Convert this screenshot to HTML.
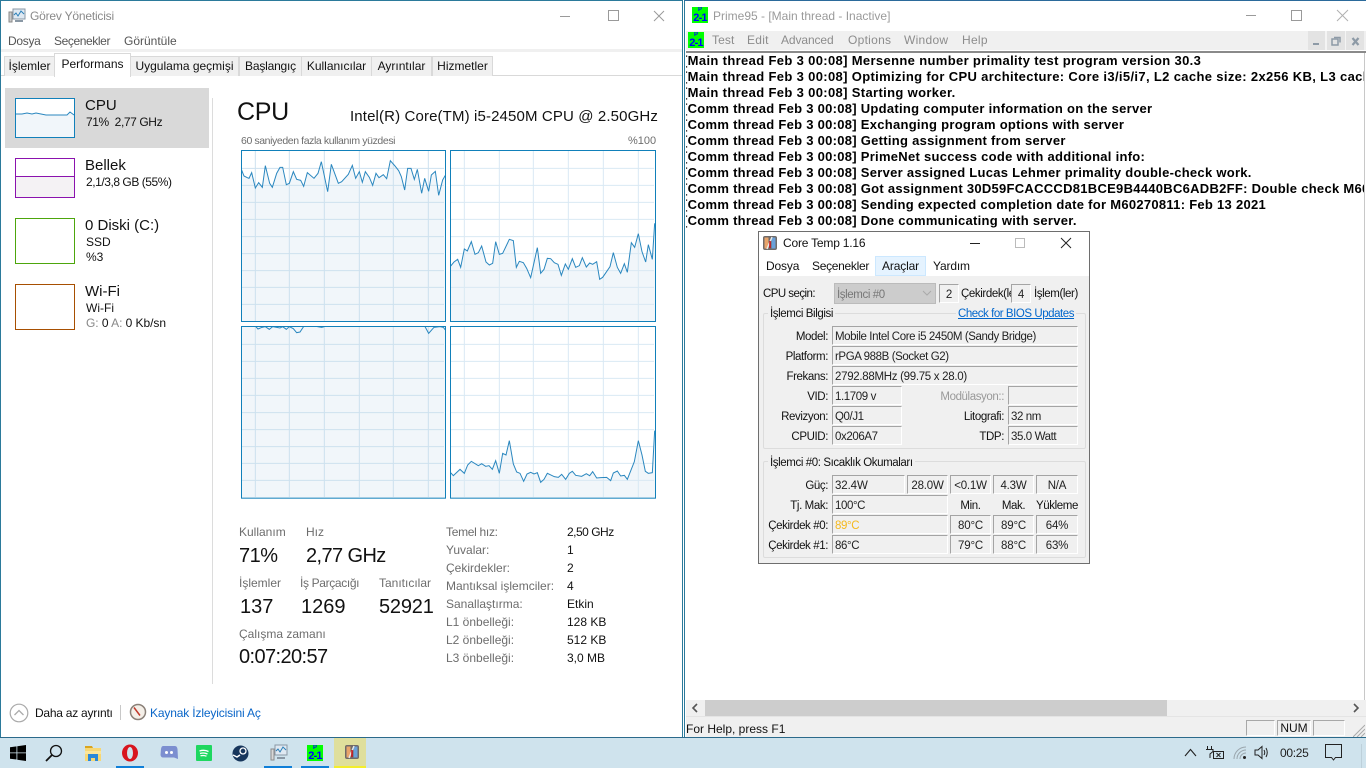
<!DOCTYPE html>
<html lang="tr"><head><meta charset="utf-8"><title>Görev Yöneticisi</title>
<style>
html,body{margin:0;padding:0;width:1366px;height:768px;overflow:hidden;background:#fff}
body{position:relative;font-family:"Liberation Sans",sans-serif;font-size:12px;color:#111}
.a,.t,.f{position:absolute}
.t{white-space:nowrap;line-height:16px}
.g{color:#666}
.l{color:#6d6d6d}
.tab{position:absolute;top:56px;height:19px;background:#f0f0f0;border:1px solid #d9d9d9;border-bottom:0;box-sizing:content-box;text-align:center;line-height:19px;white-space:nowrap}
.f{box-sizing:border-box;height:19px;border:1px solid;border-color:#a4a4a4 #fff #fff #a4a4a4;background:#f0f0f0;line-height:16px;padding:2px 0 0 2px;white-space:nowrap;overflow:hidden;color:#222}
.c{text-align:center;padding-left:0;letter-spacing:-.2px}
.r{text-align:right}
.p{position:absolute;left:-3px;white-space:pre;font-weight:bold;font-size:13px;line-height:16px;color:#000;letter-spacing:.35px}
.q{letter-spacing:.28px}
.ico{position:absolute;width:16px;height:16px;background:#0f0;overflow:hidden}
.ico b{position:absolute;left:0;width:16px;text-align:center;color:#00f;font-weight:bold;line-height:10px}
.ico .pp{top:0;font-size:6px;line-height:6px}
.ico .tt{top:6px;font-size:11px;letter-spacing:-.8px}
.ct{font-size:11.5px;letter-spacing:-.4px}
.ct .t{margin-top:1px}
.m{font-size:12px;letter-spacing:-.15px}
</style></head><body>

<!-- Task Manager window -->
<div class="a" style="left:0;top:0;width:683px;height:738px;background:#fff;border:1px solid #2b7a9b;box-sizing:border-box"></div>
<svg class="a" style="left:8px;top:8px" width="18" height="16" viewBox="0 0 18 16"><rect x="5" y="1" width="12" height="10" fill="#dfe9f2" stroke="#8a98a5"/><path d="M6 7l2-2 2 3 3-5 3 3" fill="none" stroke="#2a7fb8"/><rect x="1" y="4" width="3" height="10" fill="#c9c9c9" stroke="#8a8a8a"/><path d="M7 13h8" stroke="#8a98a5" stroke-width="2"/></svg>
<div class="t" style="left:30px;top:8px;color:#8a8a8a;letter-spacing:-.2px">Görev Yöneticisi</div>
<svg class="a" style="left:560px;top:8px" width="110" height="16" fill="none" stroke="#9a9a9a"><path d="M0 8.500H10"/><rect x="48.500" y="2.500" width="10" height="10"/><path d="M94 3l10 10M104 3L94 13"/></svg>
<div class="t l" style="left:8px;top:33px;color:#555;letter-spacing:-.3px">Dosya</div>
<div class="t l" style="left:54px;top:33px;color:#555;letter-spacing:-.4px">Seçenekler</div>
<div class="t l" style="left:124px;top:33px;color:#555">Görüntüle</div>
<div class="a" style="left:1px;top:49px;width:681px;height:3px;background:#f0f0f0"></div>
<div class="a" style="left:1px;top:75px;width:681px;height:1px;background:#d9d9d9"></div>
<div class="tab" style="left:4px;width:49px">İşlemler</div>
<div class="tab" style="left:130px;width:107px">Uygulama geçmişi</div>
<div class="tab" style="left:239px;width:61px;letter-spacing:-.2px">Başlangıç</div>
<div class="tab" style="left:301px;width:69px">Kullanıcılar</div>
<div class="tab" style="left:371px;width:59px">Ayrıntılar</div>
<div class="tab" style="left:432px;width:59px">Hizmetler</div>
<div class="tab" style="left:54px;top:53px;width:75px;height:23px;background:#fff;line-height:20px;z-index:2">Performans</div>

<!-- Sidebar -->
<div class="a" style="left:5px;top:88px;width:204px;height:60px;background:#d9d9d9"></div>
<div class="a" style="left:212px;top:98px;width:1px;height:586px;background:#dcdcdc"></div>
<div class="a" style="left:15px;top:98px;width:60px;height:40px;box-sizing:border-box;border:1px solid #1180ba;background:#fff"></div>
<svg class="a" style="left:16px;top:99px" width="58" height="38"><path d="M0 15l6 0 5-1 5 1 4-1 5 1 5 1 6 0 5 0 6 0 4 0 3-3 4 3V38H0z" fill="#f1f6fa"/><path d="M0 15l6 0 5-1 5 1 4-1 5 1 5 1 6 0 5 0 6 0 4 0 3-3 4 3" fill="none" stroke="#2a87bf"/></svg>
<div class="t" style="left:85px;top:98px;font-size:15px">CPU</div>
<div class="t" style="left:86px;top:114px;letter-spacing:-.4px">71%&nbsp; 2,77 GHz</div>
<div class="a" style="left:15px;top:158px;width:60px;height:40px;box-sizing:border-box;border:1px solid #8b12ae;background:linear-gradient(#fff 0 17px,#8b12ae 17px 18px,#f4f2f4 18px)"></div>
<div class="t" style="left:85px;top:158px;font-size:15px">Bellek</div>
<div class="t" style="left:86px;top:174px;letter-spacing:-.45px">2,1/3,8 GB (55%)</div>
<div class="a" style="left:15px;top:218px;width:60px;height:46px;box-sizing:border-box;border:1px solid #4da60c;background:#fff"></div>
<div class="t" style="left:85px;top:218px;font-size:15px">0 Diski (C:)</div>
<div class="t" style="left:86px;top:234px">SSD</div>
<div class="t" style="left:86px;top:249px">%3</div>
<div class="a" style="left:15px;top:284px;width:60px;height:46px;box-sizing:border-box;border:1px solid #a74f01;background:#fff"></div>
<div class="t" style="left:85px;top:284px;font-size:15px">Wi-Fi</div>
<div class="t" style="left:86px;top:300px">Wi-Fi</div>
<div class="t" style="left:86px;top:315px;letter-spacing:-.05px"><span style="color:#888">G:</span> 0 <span style="color:#888">A:</span> 0 Kb/sn</div>

<!-- Main -->
<div class="t" style="left:237px;top:96px;font-size:25px;line-height:32px;letter-spacing:-.3px">CPU</div>
<div class="t" style="left:350px;top:108px;font-size:15px;line-height:18px;letter-spacing:.13px">Intel(R) Core(TM) i5-2450M CPU @ 2.50GHz</div>
<div class="t l" style="left:241px;top:133px;font-size:10.500px;letter-spacing:-.4px">60 saniyeden fazla kullanım yüzdesi</div>
<div class="t l" style="left:628px;top:133px;font-size:11px">%100</div>

<svg class="a" style="left:230px;top:140px" width="440" height="370" viewBox="0 0 1320 1110">
<defs>
<clipPath id="c1"><rect x="36" y="33" width="610" height="510"/></clipPath>
<clipPath id="c2"><rect x="663" y="33" width="613" height="510"/></clipPath>
<clipPath id="c3"><rect x="36" y="561" width="610" height="513"/></clipPath>
<clipPath id="c4"><rect x="663" y="561" width="613" height="513"/></clipPath>
<g id="gr" fill="none" stroke="#cde1ef" stroke-width="3">
<path d="M36 85H642M36 136H642M36 187H642M36 238H642M36 290H642M36 341H642M36 392H642M36 442H642M36 493H642"/>
<path d="M76 33V543M178 33V543M283 33V543M388 33V543M490 33V543M595 33V543"/>
</g>
<g id="gb" fill="none" stroke="#d9e9f4" stroke-width="3">
<path d="M663 85H1272M663 136H1272M663 187H1272M663 238H1272M663 290H1272M663 341H1272M663 392H1272M663 442H1272M663 493H1272"/>
<path d="M703 33V543M808 33V543M910 33V543M1015 33V543M1120 33V543M1225 33V543"/>
</g>
</defs>
<!-- G1 -->
<rect x="36" y="33" width="610" height="510" fill="#fff"/>
<g clip-path="url(#c1)">
<polygon fill="#f1f6fa" points="34,88 42,108 52,113 57,115 65,98 76,144 86,128 97,142 106,77 119,130 127,142 140,100 150,82 158,82 169,134 178,130 190,95 200,118 212,121 221,139 232,98 252,115 264,100 274,65 293,155 304,73 325,130 335,125 355,103 367,76 377,115 388,95 397,127 406,95 418,112 428,136 438,100 447,113 460,104 470,116 481,62 495,78 506,92 514,110 524,150 533,85 543,85 553,118 562,88 575,160 584,115 596,154 604,105 616,94 626,166 638,120 646,106 646,545 34,545"/>
<use href="#gr"/>
<polyline fill="none" stroke="#2a87bf" stroke-width="3" points="34,88 42,108 52,113 57,115 65,98 76,144 86,128 97,142 106,77 119,130 127,142 140,100 150,82 158,82 169,134 178,130 190,95 200,118 212,121 221,139 232,98 252,115 264,100 274,65 293,155 304,73 325,130 335,125 355,103 367,76 377,115 388,95 397,127 406,95 418,112 428,136 438,100 447,113 460,104 470,116 481,62 495,78 506,92 514,110 524,150 533,85 543,85 553,118 562,88 575,160 584,115 596,154 604,105 616,94 626,166 638,120 646,106"/>
</g>
<rect x="34.500" y="31.500" width="612" height="513" fill="none" stroke="#1180ba" stroke-width="3"/>
<!-- G2 -->
<rect x="663" y="33" width="613" height="510" fill="#fff"/>
<g clip-path="url(#c2)">
<polygon fill="#f1f6fa" points="662,378 672,366 683,358 692,382 703,327 712,333 724,305 735,343 745,338 755,318 768,366 778,375 788,370 797,305 808,343 818,340 838,298 850,302 859,382 868,364 880,368 890,385 902,413 922,323 932,400 942,388 952,355 962,356 973,368 984,373 994,406 1006,372 1015,388 1027,356 1037,382 1048,377 1057,353 1069,381 1079,369 1088,373 1100,365 1109,418 1118,412 1140,380 1150,338 1162,382 1172,400 1183,371 1192,397 1204,308 1214,322 1225,281 1236,335 1247,366 1255,314 1267,358 1274,250 1276,250 1276,545 662,545"/>
<use href="#gb"/>
<polyline fill="none" stroke="#2a87bf" stroke-width="3" points="662,378 672,366 683,358 692,382 703,327 712,333 724,305 735,343 745,338 755,318 768,366 778,375 788,370 797,305 808,343 818,340 838,298 850,302 859,382 868,364 880,368 890,385 902,413 922,323 932,400 942,388 952,355 962,356 973,368 984,373 994,406 1006,372 1015,388 1027,356 1037,382 1048,377 1057,353 1069,381 1079,369 1088,373 1100,365 1109,418 1118,412 1140,380 1150,338 1162,382 1172,400 1183,371 1192,397 1204,308 1214,322 1225,281 1236,335 1247,366 1255,314 1267,358 1274,250"/>
</g>
<rect x="661.500" y="31.500" width="615" height="513" fill="none" stroke="#1180ba" stroke-width="3"/>
<!-- G3 -->
<rect x="36" y="561" width="610" height="513" fill="#f1f6fa"/>
<g clip-path="url(#c3)">
<use href="#gr" y="528"/>
<polyline fill="none" stroke="#2a87bf" stroke-width="3" transform="translate(0,540)" points="72,14 84,27 96,22 106,20 118,28 128,20 140,22 150,24 158,20 169,28 178,20 190,26 200,38 210,36 222,18"/>
<polyline fill="none" stroke="#2a87bf" stroke-width="3" transform="translate(0,540)" points="262,20 275,22 283,20"/>
<polyline fill="none" stroke="#2a87bf" stroke-width="3" transform="translate(0,540)" points="584,18 596,40 612,22 630,20 640,22 646,30"/>
</g>
<rect x="34.500" y="559.500" width="612" height="515" fill="none" stroke="#1180ba" stroke-width="3"/>
<!-- G4 -->
<rect x="663" y="561" width="613" height="513" fill="#fff"/>
<g clip-path="url(#c4)">
<polygon transform="translate(0,540)" fill="#f1f6fa" points="662,458 670,467 690,448 703,460 713,435 724,424 745,437 755,431 767,439 777,437 787,448 797,422 808,460 818,400 828,405 838,362 850,432 860,456 870,460 881,484 891,462 902,457 912,462 922,458 932,487 942,478 952,460 973,470 985,472 995,463 1007,478 1018,460 1027,454 1037,466 1055,469 1069,461 1079,467 1088,455 1100,474 1112,473 1130,472 1142,482 1150,459 1162,453 1172,468 1183,466 1192,478 1213,425 1225,362 1236,405 1246,454 1255,460 1267,458 1274,332 1276,332 1276,536 662,536"/>
<use href="#gb" y="528"/>
<polyline transform="translate(0,540)" fill="none" stroke="#2a87bf" stroke-width="3" points="662,458 670,467 690,448 703,460 713,435 724,424 745,437 755,431 767,439 777,437 787,448 797,422 808,460 818,400 828,405 838,362 850,432 860,456 870,460 881,484 891,462 902,457 912,462 922,458 932,487 942,478 952,460 973,470 985,472 995,463 1007,478 1018,460 1027,454 1037,466 1055,469 1069,461 1079,467 1088,455 1100,474 1112,473 1130,472 1142,482 1150,459 1162,453 1172,468 1183,466 1192,478 1213,425 1225,362 1236,405 1246,454 1255,460 1267,458 1274,332"/>
</g>
<rect x="661.500" y="559.500" width="615" height="515" fill="none" stroke="#1180ba" stroke-width="3"/>
</svg>

<!-- Stats -->
<div class="t l" style="left:239px;top:524px">Kullanım</div>
<div class="t l" style="left:306px;top:524px">Hız</div>
<div class="t" style="left:239px;top:544px;font-size:20px;line-height:24px;letter-spacing:-.5px">71%</div>
<div class="t" style="left:306px;top:544px;font-size:20px;line-height:24px;letter-spacing:-.6px">2,77 GHz</div>
<div class="t l" style="left:239px;top:575px">İşlemler</div>
<div class="t l" style="left:300px;top:575px;letter-spacing:-.35px">İş Parçacığı</div>
<div class="t l" style="left:379px;top:575px">Tanıtıcılar</div>
<div class="t" style="left:240px;top:595px;font-size:20px;line-height:24px">137</div>
<div class="t" style="left:301px;top:595px;font-size:20px;line-height:24px">1269</div>
<div class="t" style="left:379px;top:595px;font-size:20px;line-height:24px;letter-spacing:-.2px">52921</div>
<div class="t l" style="left:239px;top:626px">Çalışma zamanı</div>
<div class="t" style="left:239px;top:645px;font-size:20px;line-height:24px;letter-spacing:-.6px">0:07:20:57</div>

<div class="t l" style="left:446px;top:524px;letter-spacing:-.3px">Temel hız:</div><div class="t" style="left:567px;top:524px;letter-spacing:-.5px">2,50 GHz</div>
<div class="t l" style="left:446px;top:542px">Yuvalar:</div><div class="t" style="left:567px;top:542px">1</div>
<div class="t l" style="left:446px;top:560px">Çekirdekler:</div><div class="t" style="left:567px;top:560px">2</div>
<div class="t l" style="left:446px;top:578px">Mantıksal işlemciler:</div><div class="t" style="left:567px;top:578px">4</div>
<div class="t l" style="left:446px;top:596px">Sanallaştırma:</div><div class="t" style="left:567px;top:596px">Etkin</div>
<div class="t l" style="left:446px;top:614px">L1 önbelleği:</div><div class="t" style="left:567px;top:614px">128 KB</div>
<div class="t l" style="left:446px;top:632px">L2 önbelleği:</div><div class="t" style="left:567px;top:632px">512 KB</div>
<div class="t l" style="left:446px;top:650px">L3 önbelleği:</div><div class="t" style="left:567px;top:650px">3,0 MB</div>

<!-- footer -->
<svg class="a" style="left:9px;top:703px" width="20" height="20" fill="none" stroke="#aaa"><circle cx="10" cy="10" r="8.800" stroke-width="1.200"/><path d="M5.500 12l4.500-4.500 4.500 4.500" stroke-width="1.300"/></svg>
<div class="t" style="left:35px;top:705px;letter-spacing:-.25px">Daha az ayrıntı</div>
<div class="a" style="left:120px;top:705px;width:1px;height:15px;background:#c8c8c8"></div>
<svg class="a" style="left:129px;top:703px" width="18" height="18"><circle cx="9" cy="9" r="7.500" fill="#f4efe8" stroke="#8a8078" stroke-width="1.500"/><path d="M5 4.500l6 8" stroke="#c0392b" stroke-width="1.500"/></svg>
<div class="t" style="left:150px;top:705px;color:#0a66c8;letter-spacing:-.15px">Kaynak İzleyicisini Aç</div>

<!-- Prime95 window -->
<div class="a" style="left:684px;top:0;width:682px;height:738px;background:#fff;border-top:1px solid #2b6a9b;border-left:1px solid #2b7a9b;box-sizing:border-box"></div>
<div class="ico" style="left:692px;top:7px"><b class="pp">P</b><b class="tt">2-1</b></div>
<div class="t" style="left:713px;top:8px;color:#9a9a9a">Prime95 - [Main thread - Inactive]</div>
<svg class="a" style="left:1240px;top:8px" width="120" height="16" fill="none" stroke="#9a9a9a"><path d="M6 7.500H16"/><rect x="51.500" y="2.500" width="10" height="10"/><path d="M97 2l11 11M108 2L97 13" stroke="#b0b0b0"/></svg>
<div class="a" style="left:686px;top:31px;width:680px;height:19px;background:#f0f0f0"></div>
<div class="ico" style="left:688px;top:32px"><b class="pp">P</b><b class="tt">2-1</b></div>
<div class="t" style="left:712px;top:32px;color:#8c8c8c;letter-spacing:.1px">Test</div>
<div class="t" style="left:747px;top:32px;color:#8c8c8c;letter-spacing:.28px">Edit</div>
<div class="t" style="left:781px;top:32px;color:#8c8c8c;letter-spacing:-.1px">Advanced</div>
<div class="t" style="left:848px;top:32px;color:#8c8c8c;letter-spacing:.28px">Options</div>
<div class="t" style="left:904px;top:32px;color:#8c8c8c;letter-spacing:.28px">Window</div>
<div class="t" style="left:962px;top:32px;color:#8c8c8c;letter-spacing:.28px">Help</div>
<div class="a" style="left:1308px;top:31px;width:56px;height:19px;background:#e3e3e3"></div>
<div class="a" style="left:1325px;top:31px;width:2px;height:19px;background:#f4f4f4"></div>
<div class="a" style="left:1345px;top:31px;width:1px;height:19px;background:#f4f4f4"></div>
<svg class="a" style="left:1310px;top:33px" width="56" height="16" fill="none" stroke="#8d9aa6" stroke-width="1.500"><path d="M3 11h6" stroke-width="2"/><rect x="22" y="6" width="6" height="6"/><path d="M24 4.500h6v5"/><path d="M42.500 5l6 7M48.500 5l-6 7" stroke-width="2.200"/></svg>
<div class="a" style="left:686px;top:51px;width:680px;height:2px;background:#8a8a8a"></div>
<div class="a" style="left:1364px;top:53px;width:1px;height:647px;background:#c8c8c8"></div>

<div class="a" style="left:686px;top:53px;width:678px;height:176px;overflow:hidden">
<div class="p" style="top:0">[Main thread Feb 3 00:08] Mersenne number primality test program version 30.3</div>
<div class="p" style="top:16px">[Main thread Feb 3 00:08] Optimizing for CPU architecture: Core i3/i5/i7, L2 cache size: 2x256 KB, L3 cache size: 3 MB</div>
<div class="p" style="top:32px">[Main thread Feb 3 00:08] Starting worker.</div>
<div class="p q" style="top:48px">[Comm thread Feb 3 00:08] Updating computer information on the server</div>
<div class="p q" style="top:64px">[Comm thread Feb 3 00:08] Exchanging program options with server</div>
<div class="p q" style="top:80px">[Comm thread Feb 3 00:08] Getting assignment from server</div>
<div class="p q" style="top:96px">[Comm thread Feb 3 00:08] PrimeNet success code with additional info:</div>
<div class="p q" style="top:112px">[Comm thread Feb 3 00:08] Server assigned Lucas Lehmer primality double-check work.</div>
<div class="p q" style="top:128px">[Comm thread Feb 3 00:08] Got assignment 30D59FCACCCD81BCE9B4440BC6ADB2FF: Double check M60270811</div>
<div class="p q" style="top:144px">[Comm thread Feb 3 00:08] Sending expected completion date for M60270811: Feb 13 2021</div>
<div class="p q" style="top:160px">[Comm thread Feb 3 00:08] Done communicating with server.</div>
</div>

<!-- scroll + status -->
<div class="a" style="left:686px;top:700px;width:680px;height:16px;background:#f0f0f0"></div>
<div class="a" style="left:705px;top:700px;width:462px;height:16px;background:#cdcdcd"></div>
<svg class="a" style="left:690px;top:703px" width="10" height="10" fill="none" stroke="#555" stroke-width="1.600"><path d="M7 1L3 5l4 4"/></svg>
<svg class="a" style="left:1351px;top:703px" width="10" height="10" fill="none" stroke="#555" stroke-width="1.600"><path d="M3 1l4 4-4 4"/></svg>
<div class="a" style="left:686px;top:716px;width:680px;height:1px;background:#e4e4e4"></div>
<div class="a" style="left:686px;top:717px;width:680px;height:20px;background:#f0f0f0"></div>
<div class="t" style="left:686px;top:721px">For Help, press F1</div>
<div class="a" style="left:1246px;top:720px;width:29px;height:16px;border:1px solid;border-color:#a8a8a8 #fff #fff #a8a8a8;box-sizing:border-box"></div>
<div class="a" style="left:1277px;top:720px;width:34px;height:16px;border:1px solid;border-color:#a8a8a8 #fff #fff #a8a8a8;box-sizing:border-box;line-height:15px;text-align:center;color:#111">NUM</div>
<div class="a" style="left:1313px;top:720px;width:32px;height:16px;border:1px solid;border-color:#a8a8a8 #fff #fff #a8a8a8;box-sizing:border-box"></div>
<svg class="a" style="left:1353px;top:724px" width="12" height="13" stroke="#aaa"><path d="M0 13L12 1M4 13l8-8M8 13l4-4"/></svg>
<div class="a" style="left:0;top:737px;width:1366px;height:1px;background:#2b6a8b"></div>

<!-- Core Temp -->
<div class="a" style="left:758px;top:231px;width:332px;height:333px;box-sizing:border-box;border:1px solid #6e6e6e;background:#f0f0f0"></div>
<div class="a" style="left:759px;top:232px;width:330px;height:44px;background:#fff"></div>
<svg class="a" style="left:762px;top:235px" width="16" height="16"><rect x="1" y="1" width="14" height="14" rx="2" fill="#6f6a68"/><rect x="2.500" y="2.500" width="4" height="11" fill="#e8a46a"/><rect x="9.500" y="2.500" width="4" height="11" fill="#6aa0d8"/><path d="M5 14L10 2" stroke="#e8e8e8" stroke-width="1.500"/><path d="M8 13V6" stroke="#c8161c" stroke-width="1.600"/></svg>
<div class="t" style="left:783px;top:235px;letter-spacing:-.2px">Core Temp 1.16</div>
<svg class="a" style="left:965px;top:237px" width="115" height="13" fill="none"><path d="M5 6.500H15" stroke="#222"/><rect x="50.500" y="1.500" width="9" height="9" stroke="#bbb"/><path d="M96 1l10 10M106 1L96 11" stroke="#222"/></svg>
<div class="a" style="left:875px;top:256px;width:51px;height:20px;box-sizing:border-box;background:#e5f3ff;border:1px solid #cce8ff"></div>
<div class="t m" style="left:766px;top:258px">Dosya</div>
<div class="t m" style="left:812px;top:258px;letter-spacing:-.3px">Seçenekler</div>
<div class="t m" style="left:882px;top:258px">Araçlar</div>
<div class="t m" style="left:933px;top:258px">Yardım</div>

<div class="ct">
<div class="t" style="left:763px;top:285px;letter-spacing:-.55px">CPU seçin:</div>
<div class="a" style="left:834px;top:283px;width:102px;height:21px;box-sizing:border-box;background:#ccc;border:1px solid #bbb"></div>
<div class="t" style="left:837px;top:286px;color:#777">İşlemci #0</div>
<svg class="a" style="left:922px;top:290px" width="10" height="7" fill="none" stroke="#aaa"><path d="M1 1l4 4 4-4"/></svg>
<div class="f c" style="left:939px;top:284px;width:20px">2</div>
<div class="t" style="left:961px;top:285px;width:50px;overflow:hidden">Çekirdek(ler)</div>
<div class="f c" style="left:1011px;top:284px;width:20px">4</div>
<div class="t" style="left:1034px;top:285px">İşlem(ler)</div>

<!-- group 1 -->
<div class="a" style="left:763px;top:313px;width:323px;height:136px;box-sizing:border-box;border:1px solid #dcdcdc;border-radius:2px"></div>
<div class="t" style="left:768px;top:305px;background:#f0f0f0;padding:0 2px 0 2px">İşlemci Bilgisi</div>
<div class="t" style="left:956px;top:305px;background:#f0f0f0;padding:0 2px;color:#0066cc;text-decoration:underline;letter-spacing:-.45px">Check for BIOS Updates</div>

<div class="t r" style="left:760px;top:328px;width:68px">Model:</div><div class="f" style="left:832px;top:326px;width:246px">Mobile Intel Core i5 2450M (Sandy Bridge)</div>
<div class="t r" style="left:760px;top:348px;width:68px">Platform:</div><div class="f" style="left:832px;top:346px;width:246px">rPGA 988B (Socket G2)</div>
<div class="t r" style="left:760px;top:368px;width:68px">Frekans:</div><div class="f" style="left:832px;top:366px;width:246px;letter-spacing:-.3px">2792.88MHz (99.75 x 28.0)</div>
<div class="t r" style="left:760px;top:388px;width:68px">VID:</div><div class="f" style="left:832px;top:386px;width:70px">1.1709 v</div>
<div class="t r" style="left:910px;top:388px;width:94px;color:#999">Modülasyon::</div><div class="f" style="left:1008px;top:386px;width:70px"></div>
<div class="t r" style="left:760px;top:408px;width:68px">Revizyon:</div><div class="f" style="left:832px;top:406px;width:70px">Q0/J1</div>
<div class="t r" style="left:910px;top:408px;width:94px">Litografi:</div><div class="f" style="left:1008px;top:406px;width:70px">32 nm</div>
<div class="t r" style="left:760px;top:428px;width:68px">CPUID:</div><div class="f" style="left:832px;top:426px;width:70px">0x206A7</div>
<div class="t r" style="left:910px;top:428px;width:94px">TDP:</div><div class="f" style="left:1008px;top:426px;width:70px">35.0 Watt</div>

<!-- group 2 -->
<div class="a" style="left:763px;top:461px;width:323px;height:97px;box-sizing:border-box;border:1px solid #dcdcdc;border-radius:2px"></div>
<div class="t" style="left:768px;top:454px;background:#f0f0f0;padding:0 2px">İşlemci #0: Sıcaklık Okumaları</div>

<div class="t r" style="left:760px;top:477px;width:68px">Güç:</div>
<div class="f" style="left:832px;top:475px;width:73px;letter-spacing:-.1px">32.4W</div>
<div class="f c" style="left:907px;top:475px;width:41px">28.0W</div>
<div class="f c" style="left:950px;top:475px;width:41px">&lt;0.1W</div>
<div class="f c" style="left:993px;top:475px;width:41px">4.3W</div>
<div class="f c" style="left:1036px;top:475px;width:42px">N/A</div>

<div class="t r" style="left:760px;top:497px;width:68px">Tj. Mak:</div>
<div class="f" style="left:832px;top:495px;width:116px">100°C</div>
<div class="t" style="left:950px;top:497px;width:41px;text-align:center">Min.</div>
<div class="t" style="left:993px;top:497px;width:41px;text-align:center">Mak.</div>
<div class="t" style="left:1036px;top:497px;width:42px;text-align:center">Yükleme</div>

<div class="t r" style="left:760px;top:517px;width:68px">Çekirdek #0:</div>
<div class="f" style="left:832px;top:515px;width:116px;color:#f5b91e">89°C</div>
<div class="f c" style="left:950px;top:515px;width:41px">80°C</div>
<div class="f c" style="left:993px;top:515px;width:41px">89°C</div>
<div class="f c" style="left:1036px;top:515px;width:42px">64%</div>

<div class="t r" style="left:760px;top:537px;width:68px">Çekirdek #1:</div>
<div class="f" style="left:832px;top:535px;width:116px">86°C</div>
<div class="f c" style="left:950px;top:535px;width:41px">79°C</div>
<div class="f c" style="left:993px;top:535px;width:41px">88°C</div>
<div class="f c" style="left:1036px;top:535px;width:42px">63%</div>
</div>

<!-- Taskbar -->
<div class="a" style="left:0;top:738px;width:1366px;height:30px;background:#cfe3ed"></div>
<svg class="a" style="left:10px;top:745px" width="16" height="16" fill="#000"><path d="M0 2.300l6.500-.9V7.500H0zM7.300 1.300L16 0v7.500H7.300zM0 8.300h6.500v6.200L0 13.700zM7.300 8.300H16V16l-8.700-1.300z"/></svg>
<svg class="a" style="left:45px;top:744px" width="18" height="18" fill="none" stroke="#111" stroke-width="1.300"><circle cx="11" cy="7" r="5.500"/><path d="M7 11l-6 6" stroke-width="1.800"/></svg>
<svg class="a" style="left:85px;top:745px" width="17" height="16"><path d="M0 1h7l1 2H0z" fill="#d9a520"/><rect x="0" y="3" width="16" height="13" fill="#f7d774"/><rect x="0" y="6" width="16" height="3" fill="#fbe59a"/><path d="M3 16v-7h10v7h-3v-3H6v3z" fill="#2b88d8"/></svg>
<svg class="a" style="left:122px;top:744px" width="17" height="18"><ellipse cx="8" cy="9" rx="8" ry="8.500" fill="#d8141e"/><ellipse cx="8" cy="9" rx="3" ry="6" fill="#cfe3ed"/></svg>
<div class="a" style="left:116px;top:766px;width:28px;height:2px;background:#0f7fd8"></div>
<svg class="a" style="left:160px;top:745px" width="18" height="16"><path d="M3 1h12q2 0 2.500 3l.5 10-4-1.500H3q-2 0-2.500-2.500L1 4q.5-3 2-3z" fill="#7c8fd0"/><circle cx="6.500" cy="7.500" r="1.500" fill="#fff"/><circle cx="11.500" cy="7.500" r="1.500" fill="#fff"/></svg>
<svg class="a" style="left:196px;top:745px" width="16" height="16"><rect width="16" height="16" rx="1" fill="#1ed760"/><path d="M3.500 6c3-1 6-1 9 .5M4 8.500c2.500-.7 5-.7 7.500.5M4.500 10.800c2-.5 4-.5 6 .4" fill="none" stroke="#fff" stroke-width="1.300"/></svg>
<svg class="a" style="left:232px;top:745px" width="17" height="17"><circle cx="8.500" cy="8.500" r="8" fill="#17365c"/><circle cx="11" cy="6" r="3" fill="none" stroke="#fff" stroke-width="1.300"/><path d="M1 10l4 2 3-2" fill="none" stroke="#fff" stroke-width="1.500"/></svg>
<svg class="a" style="left:270px;top:744px" width="18" height="17"><rect x="5" y="1" width="12" height="10" fill="#dfe9f2" stroke="#8a98a5"/><path d="M6 7l2-2 2 3 3-5 3 3" fill="none" stroke="#2a7fb8"/><rect x="1" y="5" width="3" height="11" fill="#d8d8d8" stroke="#8a8a8a"/><path d="M7 14h8" stroke="#8a98a5" stroke-width="2"/></svg>
<div class="a" style="left:264px;top:766px;width:28px;height:2px;background:#0f7fd8"></div>
<div class="ico" style="left:307px;top:745px"><b class="pp">P</b><b class="tt">2-1</b></div>
<div class="a" style="left:301px;top:766px;width:28px;height:2px;background:#0f7fd8"></div>
<div class="a" style="left:334px;top:738px;width:32px;height:30px;background:#dfdf9c"></div>
<svg class="a" style="left:344px;top:744px" width="16" height="16"><rect x="1" y="1" width="14" height="14" rx="2" fill="#6f6a68"/><rect x="2.500" y="2.500" width="4" height="11" fill="#e8a46a"/><rect x="9.500" y="2.500" width="4" height="11" fill="#6aa0d8"/><path d="M5 14L10 2" stroke="#e8e8e8" stroke-width="1.500"/><path d="M8 13V6" stroke="#c8161c" stroke-width="1.600"/></svg>
<div class="a" style="left:334px;top:766px;width:32px;height:2px;background:#f3ee2b"></div>

<!-- Tray -->
<svg class="a" style="left:1184px;top:748px" width="13" height="9" fill="none" stroke="#222" stroke-width="1.100"><path d="M1 8l5.500-6.500L12 8"/></svg>
<svg class="a" style="left:1206px;top:745px" width="18" height="15" fill="none" stroke="#222"><path d="M1.500 1v3M5.500 1v3M0 4.500h7v2L4 9v4"/><rect x="7.500" y="6.500" width="10" height="7" fill="#cfe3ed"/><path d="M10.500 8l4 4M14.500 8l-4 4"/></svg>
<svg class="a" style="left:1233px;top:746px" width="14" height="14" fill="none" stroke="#9aa6ad"><path d="M1 13A12 12 0 0 1 13 1M4 13A9 9 0 0 1 13 4M7 13A6 6 0 0 1 13 7"/><circle cx="11.500" cy="11.500" r="1.500" fill="#222" stroke="none"/></svg>
<svg class="a" style="left:1254px;top:745px" width="16" height="15" fill="none" stroke="#222"><path d="M1 5h3l4-3.500v12L4 10H1z"/><path d="M10 5q1.500 2.500 0 5M12 3q2.500 4.500 0 9" /></svg>
<div class="t" style="left:1280px;top:745px;color:#222;letter-spacing:-.3px">00:25</div>
<svg class="a" style="left:1325px;top:744px" width="17" height="17" fill="none" stroke="#222"><path d="M.5 .5h16v13h-6l-2 2.500-2-2.500h-6z"/></svg>
<div class="a" style="left:1361px;top:744px;width:1px;height:24px;background:#bdd0da"></div>
</body></html>
